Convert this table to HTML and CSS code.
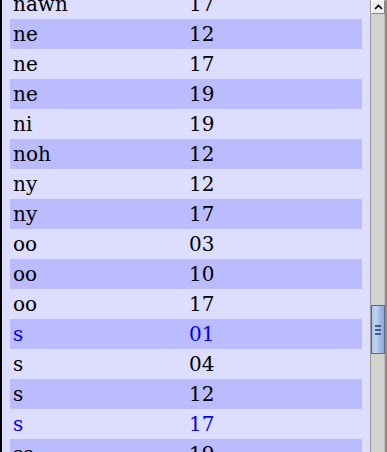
FILE: index.html
```html
<!DOCTYPE html>
<html>
<head>
<meta charset="utf-8">
<link rel="stylesheet" href="styles.css">
</head>
<body>
<div class="frame">
  <div class="pane">
    <div class="list">
      <div class="row"><span class="c1">nawn</span><span class="c2">17</span></div>
      <div class="row"><span class="c1">ne</span><span class="c2">12</span></div>
      <div class="row"><span class="c1">ne</span><span class="c2">17</span></div>
      <div class="row"><span class="c1">ne</span><span class="c2">19</span></div>
      <div class="row"><span class="c1">ni</span><span class="c2">19</span></div>
      <div class="row"><span class="c1">noh</span><span class="c2">12</span></div>
      <div class="row"><span class="c1">ny</span><span class="c2">12</span></div>
      <div class="row"><span class="c1">ny</span><span class="c2">17</span></div>
      <div class="row"><span class="c1">oo</span><span class="c2">03</span></div>
      <div class="row"><span class="c1">oo</span><span class="c2">10</span></div>
      <div class="row"><span class="c1">oo</span><span class="c2">17</span></div>
      <div class="row link"><span class="c1">s</span><span class="c2">01</span></div>
      <div class="row"><span class="c1">s</span><span class="c2">04</span></div>
      <div class="row"><span class="c1">s</span><span class="c2">12</span></div>
      <div class="row link"><span class="c1">s</span><span class="c2">17</span></div>
      <div class="row"><span class="c1">ss</span><span class="c2">19</span></div>
    </div>
  </div>
  <div class="scrollbar">
    <div class="btn-up">
      <svg width="9" height="6" viewBox="0 0 9 6"><path d="M1 5 L4.5 1.5 L8 5" fill="none" stroke="#000" stroke-width="1.6"/></svg>
    </div>
    <div class="track">
      <div class="thumb">
        <span class="grip"></span><span class="grip"></span><span class="grip"></span>
      </div>
    </div>
  </div>
</div>
</body>
</html>
```

FILE: styles.css
```css
html, body {
  margin: 0;
  padding: 0;
  height: 452px;
  overflow: hidden;
}
.frame {
  display: flex;
  height: 452px;
  border-left: 2px solid #000;
  background: #ddddff;
  overflow: hidden;
}
.pane {
  flex: 1;
  overflow: hidden;
  padding-left: 8px;
}
.list {
  width: 352px;
  margin-top: -11px;
}
.row {
  display: flex;
  height: 30px;
  line-height: 30px;
  font-family: "DejaVu Serif", serif;
  font-size: 20px;
  color: #000;
  white-space: nowrap;
}
.row:nth-child(even) {
  background: #bbbbff;
}
.row.link {
  color: #0000ee;
}
.c1 {
  width: 173px;
  padding-left: 3px;
}
.c2 {
  padding-left: 3px;
}
.scrollbar {
  width: 14px;
  flex: none;
  display: flex;
  flex-direction: column;
  background: #d4d2cf;
  border-left: 1px solid #9a9894;
  border-right: 2px solid #8e8c88;
  box-shadow: inset -1px 0 0 #bcbab6;
}
.btn-up {
  width: 14px;
  height: 14px;
  background: #eeedeb;
  border-top: 1px solid #fff;
  border-left: 1px solid #fff;
  border-bottom: 1px solid #8a8884;
  border-right: 1px solid #8a8884;
  box-sizing: border-box;
  display: flex;
  align-items: center;
  justify-content: center;
}
.track {
  flex: 1;
  display: flex;
  flex-direction: column;
}
.thumb {
  margin-top: 291px;
  height: 49px;
  box-sizing: border-box;
  border: 1px solid #4f6e9c;
  background: linear-gradient(to right, #a9c1ea, #c3d5f3 30%, #9fb7e2 70%, #8ea8d8);
  display: flex;
  flex-direction: column;
  align-items: center;
  justify-content: center;
  gap: 2px;
}
.grip {
  display: block;
  width: 6px;
  height: 2px;
  background: #3f5e8e;
}
```
